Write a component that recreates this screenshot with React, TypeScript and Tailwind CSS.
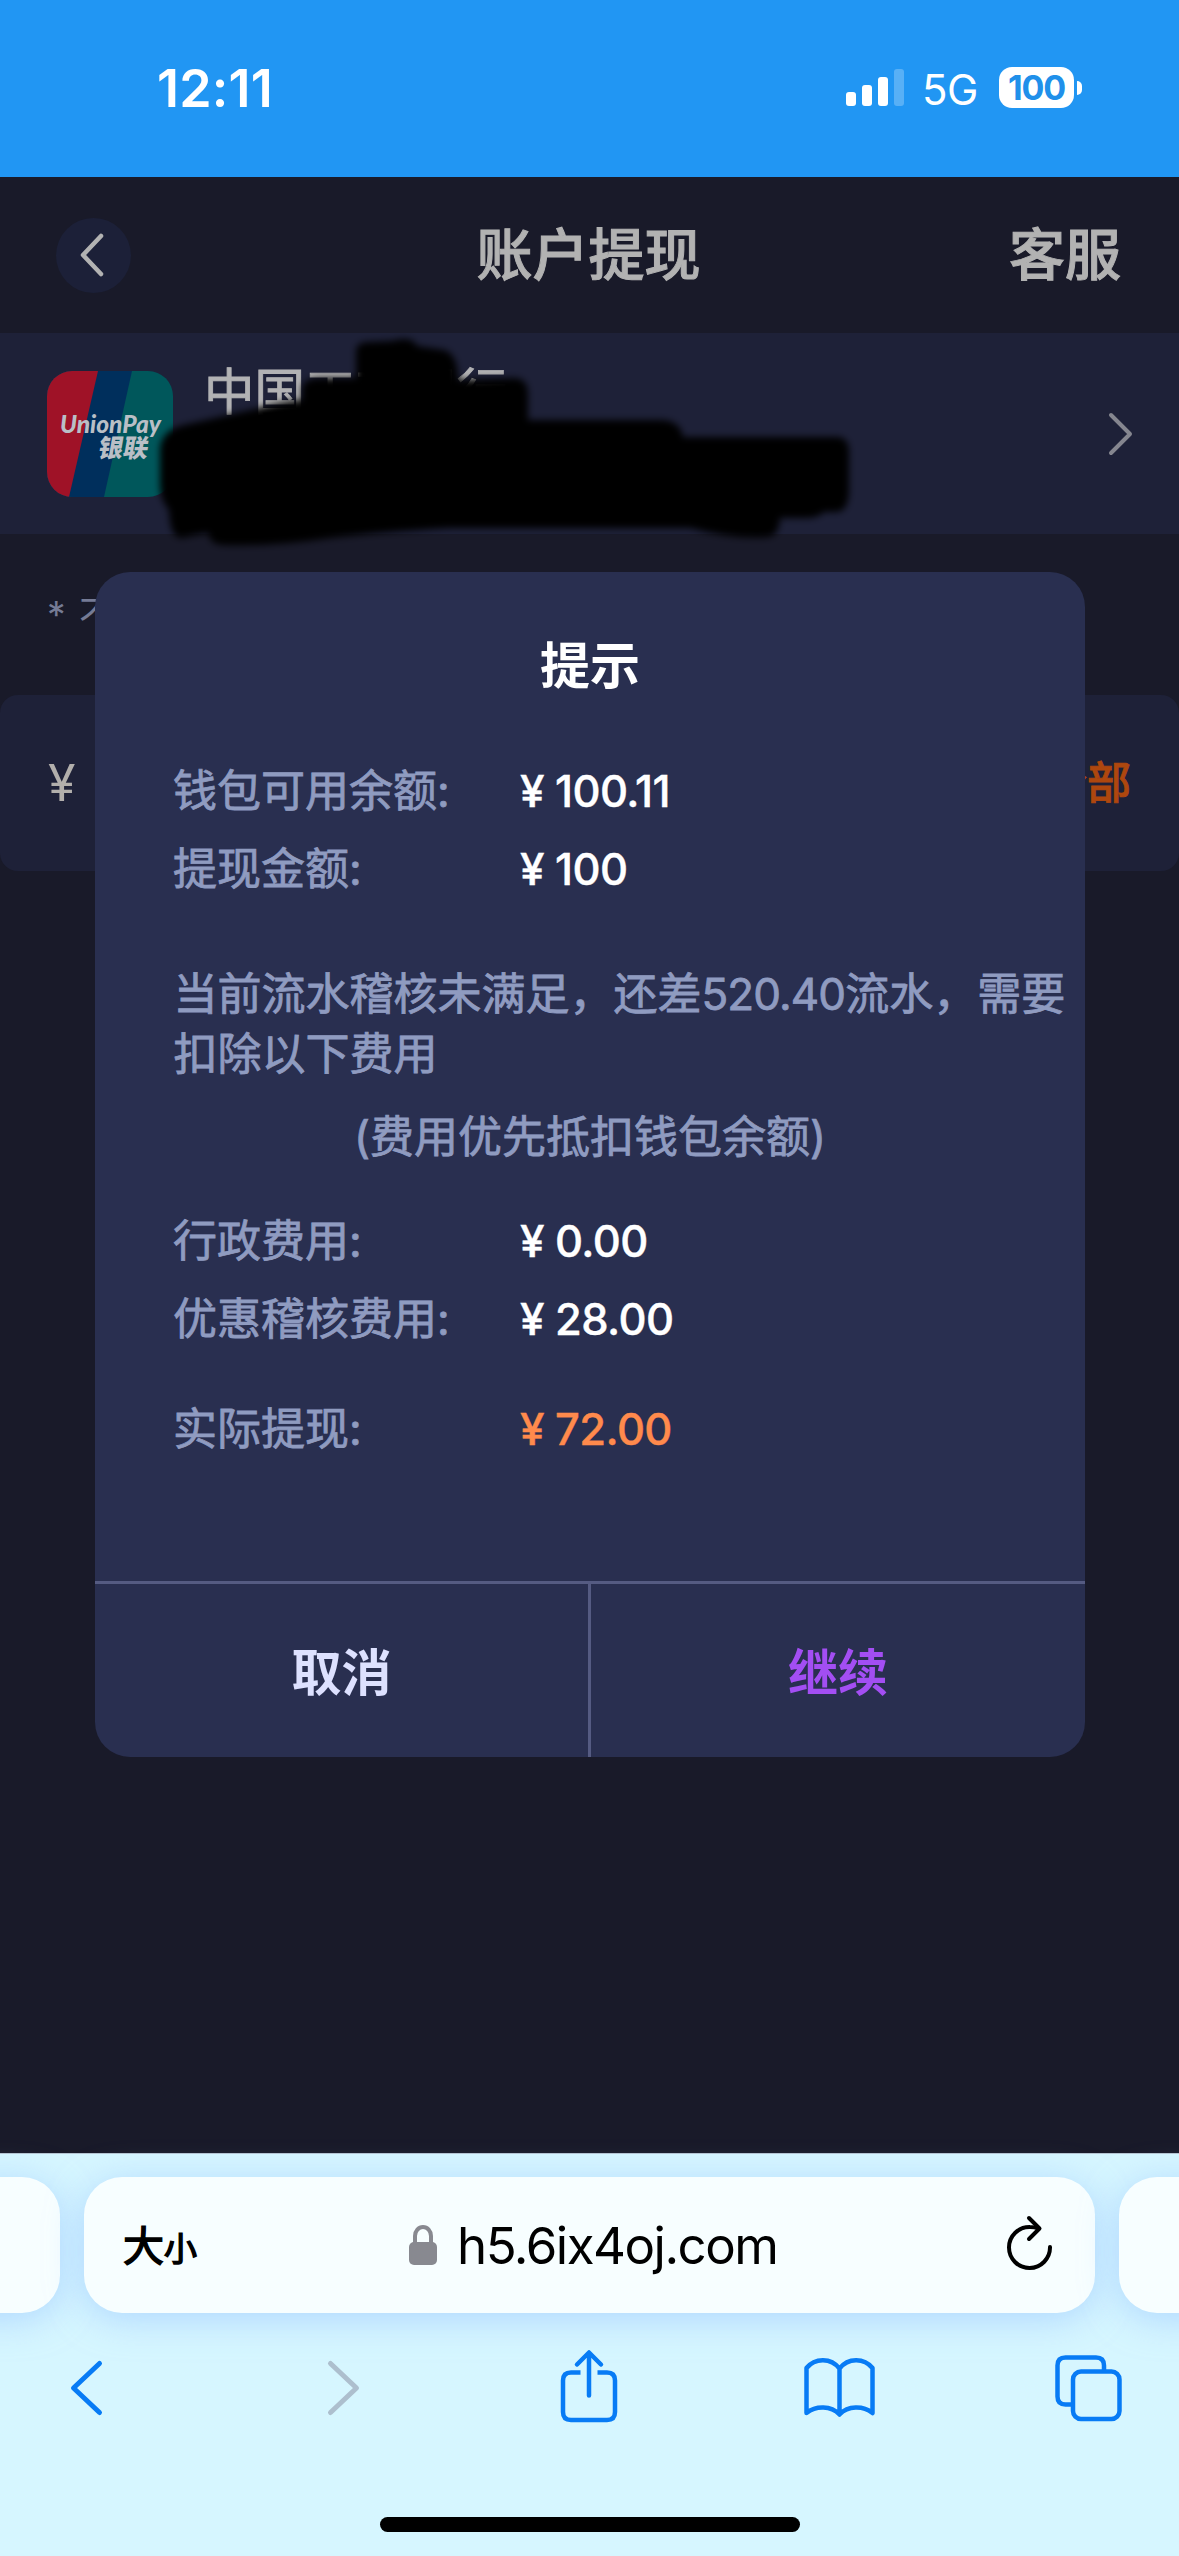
import React from "react";

function StatusBar() {
  return (
    <header className="flex h-[177px] items-start justify-between bg-[#2196f3] pl-[157px] pr-[97px] text-white">
      <div className="mt-[63px] text-[52px] font-semibold leading-[52px] tracking-[0.2px]">12:11</div>
      <div className="mt-[67px] flex items-start">
        <div className="flex h-[39px] items-end gap-[6px]">
          <span className="h-[14px] w-[10px] rounded-[3px] bg-white" />
          <span className="h-[21px] w-[10px] rounded-[3px] bg-white" />
          <span className="h-[29px] w-[10px] rounded-[3px] bg-white" />
          <span className="h-[37px] w-[10px] rounded-[3px] bg-white/25" />
        </div>
        <span className="ml-[18px] w-[58px] text-[42px] leading-[45px] tracking-[-0.5px]">5G</span>
        <div className="ml-[19px] flex items-center gap-[3px]">
          <span className="flex h-[41px] w-[75px] items-center justify-center rounded-[13px] bg-white text-[34px] font-bold leading-[41px] tracking-[-1.2px] text-[#2090ea]">
            100
          </span>
          <span className="h-[14px] w-[5px] rounded-r-full bg-white" />
        </div>
      </div>
    </header>
  );
}

function TitleBar() {
  return (
    <div className="grid h-[156px] grid-cols-[1fr_auto_1fr] items-center pl-[56px] pr-[58px] text-[56px] font-medium leading-[75px] text-[#b2b2b2] [-webkit-text-stroke:1px_#b2b2b2]">
      <button className="flex size-[75px] items-center justify-center rounded-full bg-[#1c2038]">
        <svg className="mr-[4px]" width="30" height="50" viewBox="0 0 30 50" fill="none" stroke="#b2b2b2" strokeWidth="4.5" strokeLinecap="round" strokeLinejoin="round">
          <path d="M24 6 L6 25 L24 44" />
        </svg>
      </button>
      <h1>账户提现</h1>
      <span className="justify-self-end">客服</span>
    </div>
  );
}

function UnionPayLogo() {
  return (
    <svg className="mt-[38px] shrink-0" width="126" height="126" viewBox="0 0 126 126">
      <defs>
        <clipPath id="logo-clip">
          <rect width="126" height="126" rx="25" />
        </clipPath>
      </defs>
      <g clipPath="url(#logo-clip)">
        <rect width="126" height="126" fill="#00575b" />
        <path d="M0 0H85L57 126H0Z" fill="#002f5c" />
        <path d="M0 0H51L22 126H0Z" fill="#9f1227" />
      </g>
      <g fill="#b9bfc6">
        <text x="13" y="62" fontSize="25.500" fontStyle="italic" fontWeight="900" textLength="101" lengthAdjust="spacingAndGlyphs" fontFamily="Lato, sans-serif">UnionPay</text>
        <text x="0" y="0" fontSize="25" fontWeight="900" textLength="50" transform="translate(50 86) skewX(-10)" fontFamily="'Noto Sans CJK SC', sans-serif">银联</text>
      </g>
    </svg>
  );
}

function BankRow() {
  return (
    <section className="relative flex h-[201px] bg-[#1e2138] pl-[47px] pr-[45px]">
      <UnionPayLogo />
      <div className="ml-[31px] mt-[21px] flex-1 text-[50.5px] leading-[76px] text-[#b2b2b4] [-webkit-text-stroke:0.9px_#b2b2b4]">中国工商银行</div>
      <svg className="mt-[76px]" width="30" height="50" viewBox="0 0 30 50" fill="none" stroke="#85868f" strokeWidth="4" strokeLinecap="round" strokeLinejoin="round">
        <path d="M7 6 L26 25 L7 44" />
      </svg>
      {/* Marker strokes hiding the account details */}
      <svg className="absolute left-0 top-0" width="880" height="230" viewBox="0 333 880 230">
        <defs>
          <filter id="soft" x="-5%" y="-10%" width="110%" height="120%">
            <feGaussianBlur stdDeviation="3.5" />
          </filter>
        </defs>
        <path
          filter="url(#soft)"
          fill="#000"
          d="M356 352 Q356 342 368 342 L392 341 Q412 335 417 346 L444 350 Q458 354 458 380 L515 378 Q528 379 528 394 V420 H660 Q680 420 683 437 H838 Q849 438 849 452 V492 Q848 512 836 512 H824 Q818 518 806 518 H780 Q779 536 768 537 Q735 540 690 528 H450 Q380 532 330 538 Q270 547 222 545 Q210 544 208 533 Q190 536 182 538 Q170 539 169 510 Q160 500 160 485 V448 Q162 430 184 425 L255 409 Q280 402 302 400 V388 Q304 378 320 378 H356 Z"
        />
      </svg>
    </section>
  );
}

function Row({ label, value, accent }: { label: string; value: string; accent?: boolean }) {
  return (
    <div className="flex h-[78px] items-center">
      <span className="w-[347px]">{label}</span>
      <span className={accent ? "flex font-medium text-[#ff8a4c] [-webkit-text-stroke:0.4px_#ff8a4c]" : "flex font-medium text-white [-webkit-text-stroke:0.4px_#fff]"}>
        <span className="w-[35px] text-[44px]">¥</span>
        <span className="text-[43.5px] tracking-[-0.6px]">{value}</span>
      </span>
    </div>
  );
}

function Dialog() {
  return (
    <div role="dialog" className="absolute left-[95px] top-[395px] flex h-[1185px] w-[990px] flex-col overflow-hidden rounded-[35px] bg-[#292f50]">
      <div className="flex-1 text-[44px] leading-[60px] text-[#8f9bc0] [-webkit-text-stroke:0.8px_#8f9bc0]">
        <h2 className="mt-[57px] text-center text-[50px] font-semibold leading-[75px] text-white [-webkit-text-stroke:0px]">提示</h2>
        <div className="mt-[48px] pl-[78px]">
          <Row label="钱包可用余额:" value="100.11" />
          <Row label="提现金额:" value="100" />
        </div>
        <p className="mt-[56px] whitespace-nowrap pl-[78.5px]">
          当前流水稽核未满足，还差<span className="tracking-[-0.9px]">520.40</span>流水，需要
          <br />
          扣除以下费用
        </p>
        <p className="mt-[23px] text-center">(费用优先抵扣钱包余额)</p>
        <div className="mt-[35px] pl-[78px]">
          <Row label="行政费用:" value="0.00" />
          <Row label="优惠稽核费用:" value="28.00" />
          <div className="mt-[32px]">
            <Row label="实际提现:" value="72.00" accent />
          </div>
        </div>
      </div>
      <div className="flex h-[176px] border-t-[3px] border-[#555b82] text-[50px] font-semibold leading-[75px]">
        <button className="w-[493px] pt-[5px] text-[#dde1ff]">取消</button>
        <span className="w-[3px] bg-[#555b82]" />
        <button className="flex-1 pt-[5px] text-[#a34ef3]">继续</button>
      </div>
    </div>
  );
}

function AddressBar() {
  return (
    <div className="flex h-[136px] justify-center gap-[24px]">
      <div className="w-[120px] shrink-0 rounded-[38px] bg-[#f7feff] shadow-[0_6px_36px_rgba(150,195,255,0.6)]" />
      <div className="flex w-[1011px] shrink-0 items-center rounded-[38px] bg-[#f7feff] pl-[39px] pr-[40px] text-black shadow-[0_6px_36px_rgba(150,195,255,0.6)]">
        <div className="flex w-[80px] items-baseline pt-[5px] leading-[60px] [-webkit-text-stroke:1.5px_#000]">
          <span className="text-[41px]">大</span>
          <span className="text-[33px]">小</span>
        </div>
        <svg className="ml-[206px]" width="28" height="40" viewBox="0 0 28 40">
          <path d="M6 19V11a8 9 0 0 1 16 0V19" fill="none" stroke="#888990" strokeWidth="4" />
          <rect y="17" width="28" height="23" rx="5" fill="#888990" />
        </svg>
        <span className="ml-[20px] w-[330px] pt-[2px] text-[51px] leading-[60px] tracking-[-1.5px]">h5.6ix4oj.com</span>
        <svg className="ml-auto mb-[2px]" width="52" height="60" viewBox="0 0 52 60" fill="none" stroke="#000" strokeWidth="4" strokeLinecap="round" strokeLinejoin="round">
          <path d="M36 14.500 Q31 13 27 13 A20.500 20.500 0 1 0 47 33" />
          <path d="M26 4 L36.500 14.500 L26 25" />
        </svg>
      </div>
      <div className="w-[120px] shrink-0 rounded-[38px] bg-[#f7feff] shadow-[0_6px_36px_rgba(150,195,255,0.6)]" />
    </div>
  );
}

function Toolbar() {
  return (
    <nav className="mt-[33px] flex h-[80px] items-start pl-[66px]">
      <svg width="40" height="80" viewBox="66 2346 40 80" fill="none" stroke="#087bf5" strokeWidth="5" strokeLinecap="round" strokeLinejoin="round">
        <path d="M99.500 2363.500 L73.500 2388 L99.500 2412.500" />
      </svg>
      <svg className="ml-[217px]" width="40" height="80" viewBox="323 2346 40 80" fill="none" stroke="#adbfce" strokeWidth="5" strokeLinecap="round" strokeLinejoin="round">
        <path d="M330.500 2363.500 L356.500 2388 L330.500 2412.500" />
      </svg>
      <svg className="ml-[194px]" width="64" height="80" viewBox="557 2346 64 80" fill="none" stroke="#087bf5" strokeWidth="4.500" strokeLinejoin="round">
        <path d="M580.500 2372.500H571q-8 0-8 8V2412q0 8 8 8h36q8 0 8-8V2380.500q0-8-8-8H597.500" />
        <path d="M589 2395.500V2353M577 2364.500 L589 2352.500 L601 2364.500" strokeLinecap="round" />
      </svg>
      <svg className="ml-[181px]" width="76" height="80" viewBox="802 2346 76 80" fill="none" stroke="#087bf5" strokeWidth="4.500" strokeLinecap="round" strokeLinejoin="round">
        <path d="M839.500 2368.500 C831 2357.500 815 2357.500 806.500 2368 V2413 C816 2405.500 831 2405.500 839.500 2414.500 C848 2405.500 863 2405.500 872.500 2413 V2368 C864 2357.500 848 2357.500 839.500 2368.500 V2414" />
      </svg>
      <svg className="ml-[173px]" width="76" height="80" viewBox="1051 2346 76 80" fill="none" stroke="#087bf5" strokeWidth="4.500">
        <path d="M1071 2404.500H1065.500q-8 0-8-8V2365.500q0-8 8-8h30.500q8 0 8 8V2370" />
        <rect x="1073" y="2371.500" width="46.500" height="47.500" rx="8" />
      </svg>
    </nav>
  );
}

export default function App() {
  return (
    <main className="flex h-[2556px] w-[1179px] flex-col overflow-hidden bg-[#191a29] font-['Inter','Noto_Sans_CJK_SC',sans-serif]">
      <StatusBar />
      <div className="relative flex-1">
        <TitleBar />
        <BankRow />
        <p className="mt-[51px] pl-[47px] text-[37px] leading-[60px] text-[#757b95] [word-spacing:3px]">* 不支持信用卡提现</p>
        <section className="mt-[50px] flex h-[176px] items-center justify-between rounded-[18px] bg-[#1e2138] pl-[48px] pr-[48px]">
          <span className="text-[50px] font-normal leading-[60px] text-[#b2afac]">¥</span>
          <span className="text-[44px] font-medium leading-[60px] text-[#ae470e] [-webkit-text-stroke:0.8px_#ae470e]">全部</span>
        </section>
        <Dialog />
      </div>
      <footer className="relative flex h-[403px] flex-col border-t border-[#b5c4d2] bg-[#d6f6ff] pt-[23px]">
        <AddressBar />
        <Toolbar />
        <div className="mx-auto mt-[91px] h-[15px] w-[420px] rounded-full bg-black" />
      </footer>
    </main>
  );
}
